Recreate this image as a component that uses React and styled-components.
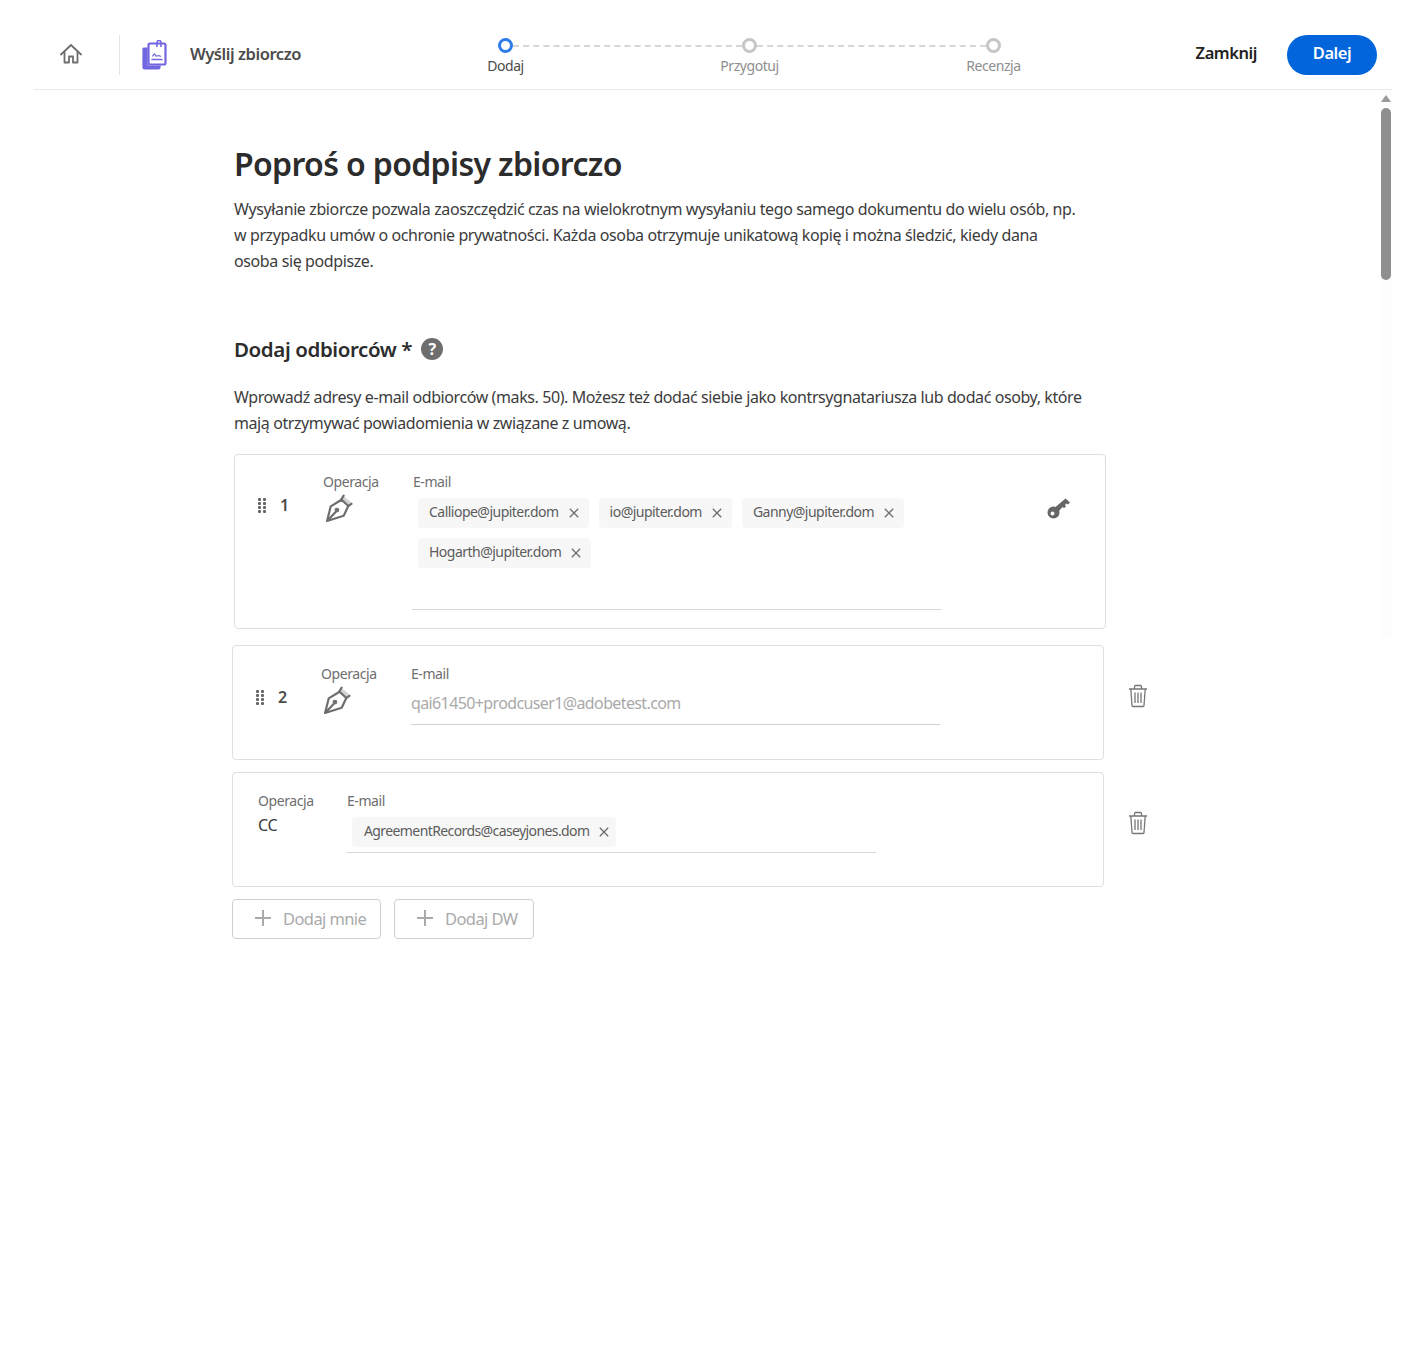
import React from 'react'
import styled, { createGlobalStyle } from 'styled-components'

const GlobalStyle = createGlobalStyle`
  html, body { margin: 0; padding: 0; background: #fff; }
  body {
    font-family: "Noto Sans", "Liberation Sans", sans-serif;
    color: #2c2c2c;
    font-size: 16px;
    letter-spacing: -0.39px;
  }
`

const Page = styled.div`
  width: 1414px;
  height: 1349px;
  overflow: hidden;
`
const Header = styled.header`
  display: flex;
  align-items: flex-start;
  height: 89px;
  margin: 0 22px 0 34px;
  border-bottom: 1px solid #e8e8e8;
`
const HomeButton = styled.div`
  width: 22px;
  height: 20px;
  margin: 44px 0 0 26px;
  color: #6e6e6e;
`
const Divider = styled.div`
  width: 1px;
  height: 40px;
  margin: 35px 22px 0 37px;
  background: #e4e4e4;
`
const DocIcon = styled.div`
  width: 25px;
  height: 30px;
  margin-top: 40px;
`
const HeaderTitle = styled.div`
  width: 308px;
  margin: 43px 0 0 23px;
  font-size: 16.5px;
  line-height: 22px;
  font-weight: 600;
  letter-spacing: -0.45px;
  color: #4b4b4b;
`
const Stepper = styled.div`
  display: flex;
  margin-top: 38px;
`
const Step = styled.div`
  display: flex;
  flex-direction: column;
  align-items: center;
  width: 15px;
`
const StepDot = styled.div`
  box-sizing: border-box;
  width: 15px;
  height: 15px;
  border-radius: 50%;
  border: 3px solid ${p => (p.$active ? '#2f7be8' : '#c6c6c6')};
`
const StepLabel = styled.div`
  margin-top: 3px;
  font-size: 14px;
  line-height: 20px;
  letter-spacing: -0.45px;
  white-space: nowrap;
  color: ${p => (p.$active ? '#4b4b4b' : '#8e8e8e')};
`
const StepLine = styled.div`
  width: 229px;
  height: 0;
  margin-top: 7px;
  border-top: 2px dashed #d6d6d6;
`
const HeaderActions = styled.div`
  display: flex;
  align-items: flex-start;
  gap: 30px;
  margin: 35px 15px 0 auto;
`
const CloseLink = styled.div`
  font-size: 16.5px;
  font-weight: 600;
  line-height: 36px;
  letter-spacing: -0.45px;
  color: #222;
`
const NextButton = styled.div`
  width: 90px;
  height: 40px;
  border-radius: 20px;
  background: #0265dc;
  color: #fff;
  font-size: 16.5px;
  font-weight: 600;
  line-height: 36px;
  letter-spacing: -0.45px;
  text-align: center;
`
const Body = styled.div`
  display: flex;
  align-items: flex-start;
  margin-right: 22px;
`
const Main = styled.main`
  flex: 1;
  padding: 52px 0 0 234px;
`
const ScrollTrack = styled.div`
  box-sizing: border-box;
  width: 12px;
  height: 548px;
  padding-top: 5px;
  background: #fdfdfd;
`
const ScrollArrow = styled.div`
  width: 0;
  height: 0;
  margin: 0 auto 6px;
  border-left: 5px solid transparent;
  border-right: 5px solid transparent;
  border-bottom: 7px solid #999;
`
const ScrollThumb = styled.div`
  width: 10px;
  height: 172px;
  margin: 0 auto;
  border-radius: 5px;
  background: #8f8f8f;
`
const Title = styled.h1`
  margin: 0;
  font-size: 32px;
  line-height: 44px;
  font-weight: 600;
  letter-spacing: -0.65px;
  color: #2c2c2c;
`
const Text = styled.p`
  margin: ${p => p.$margin};
  line-height: 26px;
  white-space: nowrap;
  letter-spacing: ${p => p.$spacing || '-0.39px'};
  color: #3c3c3c;
`
const SectionHead = styled.div`
  display: flex;
  align-items: center;
  gap: 9px;
  margin-top: 60px;
  height: 30px;
`
const SectionTitle = styled.h2`
  margin: 0;
  font-size: 20.5px;
  font-weight: 600;
  letter-spacing: -0.4px;
  color: #2c2c2c;
`
const HelpBadge = styled.div`
  width: 22px;
  height: 22px;
  border-radius: 50%;
  background: #6e6e6e;
  color: #fff;
  font-size: 16px;
  font-weight: 700;
  line-height: 22px;
  text-align: center;
`
const RowLine = styled.div`
  display: flex;
  align-items: flex-start;
  margin: ${p => p.$margin};
`
const Card = styled.div`
  box-sizing: border-box;
  display: flex;
  align-items: flex-start;
  width: 872px;
  min-height: ${p => p.$height}px;
  padding: ${p => p.$top}px 35px 0 ${p => p.$left}px;
  border: 1px solid #dfdfdf;
  border-radius: 4px;
  background: #fff;
`
const DragCell = styled.div`
  display: flex;
  align-items: center;
  width: 65px;
  height: 18px;
  margin-top: 23px;
  flex: none;
`
const DragHandle = styled.div`
  display: grid;
  grid-template-columns: 3px 3px;
  grid-auto-rows: 3px;
  gap: 1px 2px;
  width: 8px;
  margin-right: 14px;
`
const Dot = styled.span`
  border-radius: 1px;
  background: #666;
`
const RowNumber = styled.div`
  font-size: 16px;
  font-weight: 600;
  color: #4b4b4b;
`
const RoleCell = styled.div`
  flex: none;
  width: ${p => p.$width}px;
`
const Label = styled.div`
  font-size: 14px;
  line-height: 18px;
  letter-spacing: -0.42px;
  color: #6e6e6e;
`
const PenIcon = styled.div`
  width: 28px;
  height: 28px;
  margin: 3px 0 0 2px;
`
const RoleValue = styled.div`
  margin-top: 5px;
  font-size: 16px;
  line-height: 20px;
  color: #3c3c3c;
`
const EmailCell = styled.div`
  flex: none;
  width: ${p => p.$width}px;
`
const EmailLabel = styled(Label)`
  padding-left: 1px;
`
const ChipField = styled.div`
  display: flex;
  flex-wrap: wrap;
  gap: 10px;
  padding: ${p => p.$padding};
  border-bottom: 1px solid #d8d8d8;
`
const Chip = styled.div`
  display: flex;
  align-items: center;
  gap: 10px;
  height: 30px;
  padding: 0 ${p => (p.$tight ? 7 : 10)}px 0 ${p => (p.$tight ? 12 : 11)}px;
  border-radius: 4px;
  background: #f7f7f7;
  font-size: 14px;
  letter-spacing: ${p => (p.$tight ? '-0.6px' : '-0.52px')};
  color: #5c5c5c;
  white-space: nowrap;
`
const ChipText = styled.span`
  margin-bottom: 3px;
`
const ChipClose = styled.svg`
  width: 10px;
  height: 10px;
  flex: none;
`
const Placeholder = styled.div`
  height: 34px;
  margin-top: 7px;
  border-bottom: 1px solid #d0d0d0;
  font-size: 16px;
  line-height: 26px;
  letter-spacing: -0.62px;
  color: #a9a9a9;
`
const KeyIcon = styled.div`
  width: 24px;
  height: 23px;
  margin: 24px 0 0 auto;
`
const TrashIcon = styled.div`
  width: 20px;
  height: 24px;
  margin: 39px 0 0 24px;
`
const ButtonRow = styled.div`
  display: flex;
  gap: 13px;
  margin: 12px 0 0 -2px;
`
const GhostButton = styled.div`
  box-sizing: border-box;
  display: flex;
  align-items: center;
  gap: 12px;
  width: ${p => p.$width}px;
  height: 40px;
  padding: 0 0 2px 22px;
  border: 1px solid #cfcfcf;
  border-radius: 4px;
  font-size: 16.5px;
  letter-spacing: -0.6px;
  color: #aaa;
`

const Home = () => (
  <svg width="22" height="20" viewBox="0 0 22 20" fill="none" stroke="currentColor" strokeWidth="1.8" strokeLinejoin="round" strokeLinecap="round">
    <path d="M1 10.500 11 1l10 9.500" />
    <path d="M4.500 8v10.500H9V12.500h4v6h4.500V8" />
  </svg>
)

const Doc = () => (
  <svg width="25" height="30" viewBox="0 0 25 30" fill="none">
    <path d="M3 8H2a1 1 0 0 0-1 1v18.500A1.500 1.500 0 0 0 2.500 29h14a1.500 1.500 0 0 0 1.500-1.500V26H6.500A1.500 1.500 0 0 1 5 24.500V8Z" fill="#7167e0" stroke="#7167e0" strokeWidth="1.200" />
    <rect x="6.500" y="3.500" width="17" height="21" rx="1.500" stroke="#7167e0" strokeWidth="2.200" />
    <path d="M15 7V2.500a2 2 0 0 1 4 0V7" stroke="#7167e0" strokeWidth="1.600" />
    <path d="M9.500 19.500h11M10.500 16.500c1-2.500 2-3 2.500-2s1 2 2 1.500 3 0 4 .5" stroke="#7167e0" strokeWidth="1.300" />
  </svg>
)

const Pen = () => (
  <svg width="28" height="28" viewBox="0 0 27 27" fill="none" stroke="#6e6e6e" strokeWidth="2.100" strokeLinejoin="round" strokeLinecap="round">
    <path d="M17 1.500 26.500 9l-3 3-8.500-7Z" fill="#d4d4d4" stroke="none" />
    <path d="M2 26 5.500 12 16 5.500l6.500 6L18 21Z" />
    <path d="M15.500 5.500 18 1.500M22.500 11.500l3-2M2.500 25.500l7.500-8" />
    <circle cx="11.500" cy="15.500" r="1.800" fill="#6e6e6e" strokeWidth="1" />
  </svg>
)

const Key = () => (
  <svg width="24" height="23" viewBox="-1 0 24 23" fill="#666">
    <path fillRule="evenodd" d="M6.500 9.500a6 6 0 1 1 0 12 6 6 0 0 1 0-12Zm-1 5a2 2 0 1 0 0 4 2 2 0 0 0 0-4Z" />
    <path d="M8.500 10 18.500 1.500 23 5.500 21 7.500 19.500 6.500 18 8l1 1.500-2 1.500-1.500-1-4 4.500Z" />
  </svg>
)

const Trash = () => (
  <svg width="20" height="24" viewBox="0 0 20 24" fill="none" stroke="#767676" strokeWidth="1.300">
    <path d="M1 5h18M6.500 5V2.500a1 1 0 0 1 1-1h5a1 1 0 0 1 1 1V5" />
    <path d="M2.800 5 4 21.500a1 1 0 0 0 1 1h10a1 1 0 0 0 1-1L17.200 5" />
    <path d="M7 8.500v10.500M10 8.500v10.500M13 8.500v10.500" />
  </svg>
)

const Plus = () => (
  <svg width="16" height="16" viewBox="0 0 16 16" stroke="#aaa" strokeWidth="2">
    <path d="M8 0v16M0 8h16" />
  </svg>
)

const ChipItem = ({ children, tight }) => (
  <Chip $tight={tight}>
    <ChipText>{children}</ChipText>
    <ChipClose viewBox="0 0 10 10" stroke="#6e6e6e" strokeWidth="1.300">
      <path d="M.8.800l8.400 8.400M9.200.800.800 9.200" />
    </ChipClose>
  </Chip>
)

const Drag = ({ number }) => (
  <DragCell>
    <DragHandle>
      {Array.from({ length: 8 }, (_, i) => <Dot key={i} />)}
    </DragHandle>
    <RowNumber>{number}</RowNumber>
  </DragCell>
)

const steps = ['Dodaj', 'Przygotuj', 'Recenzja']

const App = () => (
  <Page>
    <GlobalStyle />
    <Header>
      <HomeButton><Home /></HomeButton>
      <Divider />
      <DocIcon><Doc /></DocIcon>
      <HeaderTitle>Wyślij zbiorczo</HeaderTitle>
      <Stepper>
        {steps.map((step, i) => (
          <React.Fragment key={step}>
            {i > 0 && <StepLine />}
            <Step>
              <StepDot $active={i === 0} />
              <StepLabel $active={i === 0}>{step}</StepLabel>
            </Step>
          </React.Fragment>
        ))}
      </Stepper>
      <HeaderActions>
        <CloseLink>Zamknij</CloseLink>
        <NextButton>Dalej</NextButton>
      </HeaderActions>
    </Header>
    <Body>
      <Main>
        <Title>Poproś o podpisy zbiorczo</Title>
        <Text $margin="10px 0 0">
          Wysyłanie zbiorcze pozwala zaoszczędzić czas na wielokrotnym wysyłaniu tego samego dokumentu do wielu osób, np.<br />
          w przypadku umów o ochronie prywatności. Każda osoba otrzymuje unikatową kopię i można śledzić, kiedy dana<br />
          osoba się podpisze.
        </Text>
        <SectionHead>
          <SectionTitle>Dodaj odbiorców *</SectionTitle>
          <HelpBadge>?</HelpBadge>
        </SectionHead>
        <Text $margin="20px 0 0" $spacing="-0.41px">
          Wprowadź adresy e-mail odbiorców (maks. 50). Możesz też dodać siebie jako kontrsygnatariusza lub dodać osoby, które<br />
          mają otrzymywać powiadomienia w związane z umową.
        </Text>
        <RowLine $margin="18px 0 0">
          <Card $height={175} $top={18} $left={23}>
            <Drag number="1" />
            <RoleCell $width={89}>
              <Label>Operacja</Label>
              <PenIcon><Pen /></PenIcon>
            </RoleCell>
            <EmailCell $width={530}>
              <EmailLabel>E-mail</EmailLabel>
              <ChipField $padding="7px 0 41px 6px">
                <ChipItem>Calliope@jupiter.dom</ChipItem>
                <ChipItem>io@jupiter.dom</ChipItem>
                <ChipItem>Ganny@jupiter.dom</ChipItem>
                <ChipItem>Hogarth@jupiter.dom</ChipItem>
              </ChipField>
            </EmailCell>
            <KeyIcon><Key /></KeyIcon>
          </Card>
        </RowLine>
        <RowLine $margin="16px 0 0 -2px">
          <Card $height={115} $top={19} $left={23}>
            <Drag number="2" />
            <RoleCell $width={90}>
              <Label>Operacja</Label>
              <PenIcon><Pen /></PenIcon>
            </RoleCell>
            <EmailCell $width={529}>
              <Label>E-mail</Label>
              <Placeholder>qai61450+prodcuser1@adobetest.com</Placeholder>
            </EmailCell>
          </Card>
          <TrashIcon><Trash /></TrashIcon>
        </RowLine>
        <RowLine $margin="12px 0 0 -2px">
          <Card $height={115} $top={19} $left={25}>
            <RoleCell $width={88}>
              <Label>Operacja</Label>
              <RoleValue>CC</RoleValue>
            </RoleCell>
            <EmailCell $width={530}>
              <EmailLabel>E-mail</EmailLabel>
              <ChipField $padding="7px 0 5px 6px">
                <ChipItem tight>AgreementRecords@caseyjones.dom</ChipItem>
              </ChipField>
            </EmailCell>
          </Card>
          <TrashIcon><Trash /></TrashIcon>
        </RowLine>
        <ButtonRow>
          <GhostButton $width={149}><Plus />Dodaj mnie</GhostButton>
          <GhostButton $width={140}><Plus />Dodaj DW</GhostButton>
        </ButtonRow>
      </Main>
      <ScrollTrack>
        <ScrollArrow />
        <ScrollThumb />
      </ScrollTrack>
    </Body>
  </Page>
)

export default App
